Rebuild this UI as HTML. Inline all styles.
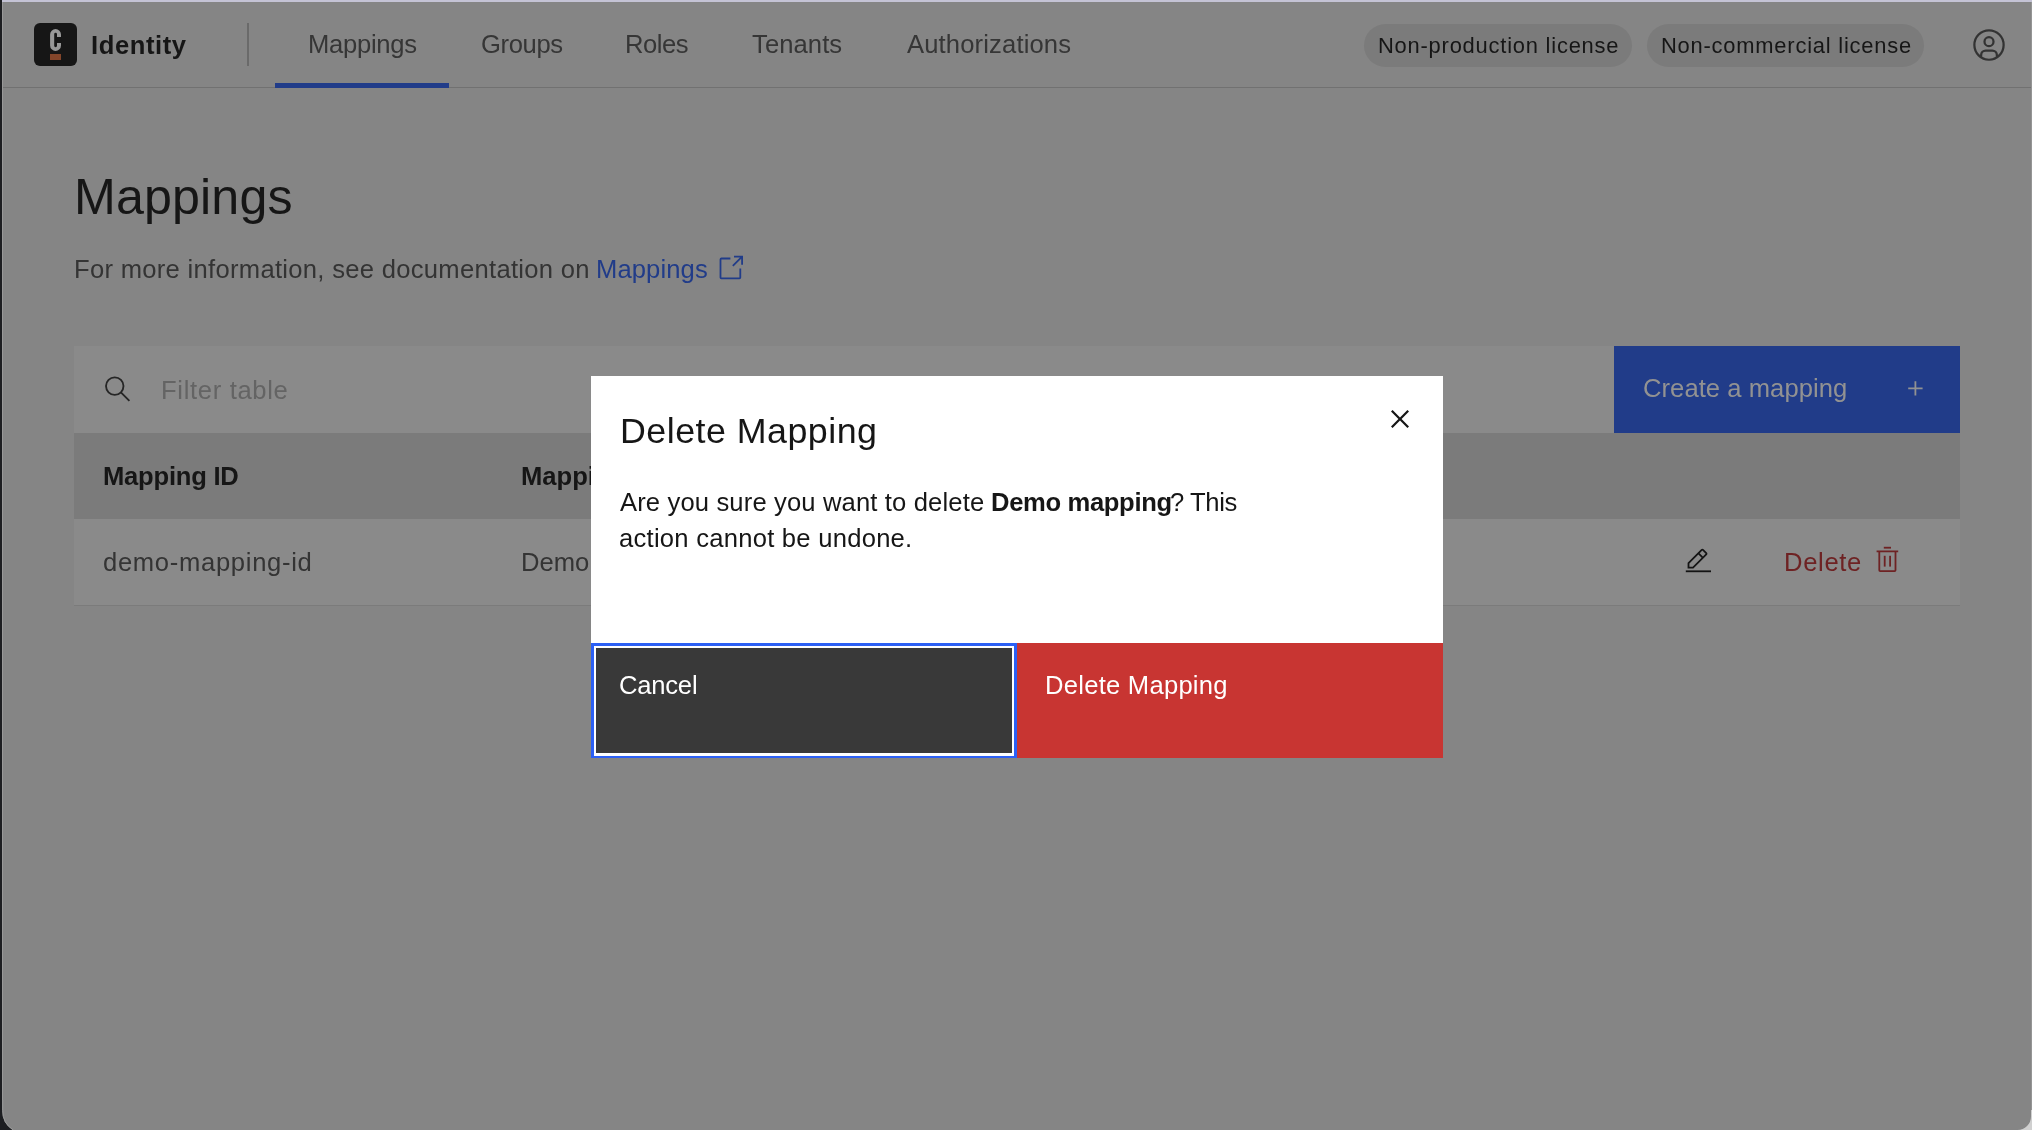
<!DOCTYPE html>
<html><head><meta charset="utf-8"><style>
html,body{margin:0;padding:0;}
body{width:2032px;height:1130px;position:relative;overflow:hidden;background:#858585;font-family:"Liberation Sans", sans-serif;}
.a{position:absolute;}
.t{position:absolute;white-space:nowrap;line-height:0;font-family:"Liberation Sans", sans-serif;will-change:transform;}
svg{position:absolute;overflow:visible;}
</style></head><body>
<div class="a" style="left:0;top:0;width:2032px;height:2px;background:#c4c3d5"></div>
<div class="a" style="left:0;top:0;width:2px;height:1130px;background:#1d1e21"></div>
<div class="a" style="left:2px;top:2px;width:1px;height:1108px;background:#999"></div>
<div class="a" style="left:2031px;top:2px;width:1px;height:1114px;background:#959595"></div>
<div class="a" style="left:3px;top:87px;width:2028px;height:1px;background:#717171"></div>
<div class="a" style="left:34px;top:23px;width:43px;height:43px;border-radius:6px;background:#161616"></div>
<svg style="left:0;top:0" width="1" height="1"><path fill-rule="evenodd" d="M50.1,34.5 a5.45,5.45 0 0 1 10.9,0 v11 a5.45,5.45 0 0 1 -10.9,0 z M54.2,34.2 a1.4,1.4 0 0 1 2.8,0 v11.6 a1.4,1.4 0 0 1 -2.8,0 z" fill="#989898"/><rect x="56.4" y="37" width="5" height="6" fill="#161616"/></svg>
<div class="a" style="left:50px;top:54px;width:11px;height:6px;background:#83452a"></div>
<div class="t" style="left:90.8px;top:44.9px;font-size:25.6px;font-weight:700;letter-spacing:0.57px;color:#161616;">Identity</div>
<div class="a" style="left:247px;top:23px;width:1.5px;height:43px;background:#6a6a6a"></div>
<div class="t" style="left:307.7px;top:43.8px;font-size:25.6px;font-weight:400;letter-spacing:-0.27px;color:#363636;">Mappings</div>
<div class="t" style="left:480.5px;top:43.8px;font-size:25.6px;font-weight:400;letter-spacing:-0.36px;color:#363636;">Groups</div>
<div class="t" style="left:624.7px;top:43.8px;font-size:25.6px;font-weight:400;letter-spacing:-0.50px;color:#363636;">Roles</div>
<div class="t" style="left:751.5px;top:43.8px;font-size:25.6px;font-weight:400;letter-spacing:0.08px;color:#363636;">Tenants</div>
<div class="t" style="left:906.6px;top:43.8px;font-size:25.6px;font-weight:400;letter-spacing:0.14px;color:#363636;">Authorizations</div>
<div class="a" style="left:275px;top:83px;width:174px;height:5px;background:#213c89"></div>
<div class="a" style="left:1364px;top:24px;width:268px;height:43px;border-radius:22px;background:#7b7b7b"></div>
<div class="a" style="left:1647px;top:24px;width:277px;height:43px;border-radius:22px;background:#7b7b7b"></div>
<div class="t" style="left:1378.0px;top:46.0px;font-size:21.9px;font-weight:400;letter-spacing:0.79px;color:#161616;">Non-production license</div>
<div class="t" style="left:1660.5px;top:46.0px;font-size:21.9px;font-weight:400;letter-spacing:0.79px;color:#161616;">Non-commercial license</div>
<svg style="left:1971px;top:27px" width="36" height="36" viewBox="0 0 32 32"><g fill="#333"><path d="M16,8a5,5,0,1,0,5,5A5,5,0,0,0,16,8Zm0,8a3,3,0,1,1,3-3A3.0034,3.0034,0,0,1,16,16Z"/><path d="M16,2A14,14,0,1,0,30,16,14.0158,14.0158,0,0,0,16,2ZM10,26.3765V25a3.0033,3.0033,0,0,1,3-3h6a3.0033,3.0033,0,0,1,3,3v1.3765a11.8989,11.8989,0,0,1-12,0Zm13.9925-1.4507A5.0016,5.0016,0,0,0,19,20H13a5.0016,5.0016,0,0,0-4.9925,4.9258,12,12,0,1,1,15.985,0Z"/></g></svg>
<div class="t" style="left:73.8px;top:197.2px;font-size:50.2px;font-weight:400;letter-spacing:0.13px;color:#161616;">Mappings</div>
<div class="t" style="left:74.0px;top:269.0px;font-size:25.6px;font-weight:400;letter-spacing:0.29px;color:#343434;">For more information, see documentation on</div>
<div class="t" style="left:596.2px;top:269.0px;font-size:25.6px;font-weight:400;letter-spacing:0.11px;color:#213c89;">Mappings</div>
<svg style="left:715.6px;top:253.9px" width="28.8" height="28.8" viewBox="0 0 32 32"><g fill="#213c89"><path d="M26,28H6a2.0027,2.0027,0,0,1-2-2V6A2.0027,2.0027,0,0,1,6,4H16V6H6V26H26V16h2V26A2.0027,2.0027,0,0,1,26,28Z"/><polygon points="20 2 20 4 26.586 4 18 12.586 19.414 14 28 5.414 28 12 30 12 30 2 20 2"/></g></svg>
<div class="a" style="left:74px;top:346px;width:1886px;height:87px;background:#8a8a8a"></div>
<svg style="left:0;top:0" width="1" height="1"><g fill="none" stroke="#262626"><circle cx="114.75" cy="386.1" r="8.75" stroke-width="1.85"/><line x1="120.9" y1="392.3" x2="129.4" y2="400.8" stroke-width="1.9"/></g></svg>
<div class="t" style="left:160.9px;top:390.0px;font-size:25.6px;font-weight:400;letter-spacing:0.67px;color:#646464;">Filter table</div>
<div class="a" style="left:1614px;top:346px;width:346px;height:87px;background:#213c89"></div>
<div class="t" style="left:1643.0px;top:388.3px;font-size:25.6px;font-weight:400;letter-spacing:0.05px;color:#929292;">Create a mapping</div>
<svg style="left:1900.5px;top:373.6px" width="28.8" height="28.8" viewBox="0 0 32 32"><polygon fill="#929292" points="17 15 17 8 15 8 15 15 8 15 8 17 15 17 15 24 17 24 17 17 24 17 24 15 17 15"/></svg>
<div class="a" style="left:74px;top:433px;width:1886px;height:86px;background:#7b7b7b"></div>
<div class="t" style="left:102.7px;top:475.7px;font-size:25.6px;font-weight:700;letter-spacing:-0.23px;color:#161616;">Mapping ID</div>
<div class="t" style="left:520.8px;top:475.7px;font-size:25.6px;font-weight:700;color:#161616">Mapping name</div>
<div class="a" style="left:74px;top:519px;width:1886px;height:86px;background:#8a8a8a"></div>
<div class="a" style="left:74px;top:605px;width:1886px;height:1px;background:#7b7b7b"></div>
<div class="t" style="left:102.5px;top:561.6px;font-size:25.6px;font-weight:400;letter-spacing:0.69px;color:#343434;">demo-mapping-id</div>
<div class="t" style="left:520.6px;top:561.6px;font-size:25.6px;font-weight:400;color:#343434">Demo mapping</div>
<svg style="left:1684.2px;top:547px" width="28.8" height="28.8" viewBox="0 0 32 32"><g fill="#141414"><rect x="2" y="26" width="28" height="2"/><path d="M25.4,9c0.8-0.8,0.8-2,0-2.8c0,0,0,0,0,0l-3.6-3.6c-0.8-0.8-2-0.8-2.8,0c0,0,0,0,0,0l-15,15V24h6.4L25.4,9z M20.4,4L24,7.6 l-3,3L17.4,7L20.4,4z M6,22v-3.6l10-10l3.6,3.6l-10,10H6z"/></g></svg>
<div class="t" style="left:1784.4px;top:562.2px;font-size:25.6px;font-weight:400;letter-spacing:0.66px;color:#6e2223;">Delete</div>
<svg style="left:1873.2px;top:545.2px" width="28.8" height="28.8" viewBox="0 0 32 32"><g fill="#6e2223"><rect x="12" y="12" width="2" height="12"/><rect x="18" y="12" width="2" height="12"/><path d="M4,6V8H6V28a2,2,0,0,0,2,2H24a2,2,0,0,0,2-2V8h2V6ZM8,28V8H24V28Z"/><rect x="12" y="2" width="8" height="2"/></g></svg>
<div class="a" style="left:591px;top:376px;width:852px;height:382px;background:#ffffff"></div>
<div class="t" style="left:620.3px;top:430.8px;font-size:35.8px;font-weight:400;letter-spacing:0.48px;color:#161616;">Delete Mapping</div>
<svg style="left:1382.3px;top:400.6px" width="36" height="36" viewBox="0 0 32 32"><polygon fill="#161616" points="24 9.4 22.6 8 16 14.6 9.4 8 8 9.4 14.6 16 8 22.6 9.4 24 16 17.4 22.6 24 24 22.6 17.4 16 24 9.4"/></svg>
<div class="t" style="left:620.3px;top:501.7px;font-size:25.6px;font-weight:400;letter-spacing:0.14px;color:#161616;">Are you sure you want to delete</div>
<div class="t" style="left:990.7px;top:501.7px;font-size:25.6px;font-weight:700;letter-spacing:-0.34px;color:#161616;">Demo mapping</div>
<div class="t" style="left:1169.8px;top:501.7px;font-size:25.6px;color:#161616;letter-spacing:-0.4px">? This</div>
<div class="t" style="left:619.3px;top:537.6px;font-size:25.6px;font-weight:400;letter-spacing:0.25px;color:#161616;">action cannot be undone.</div>
<div class="a" style="left:591px;top:643px;width:426px;height:115px;background:#2c60f5"></div>
<div class="a" style="left:593.8px;top:645.8px;width:420.4px;height:109.9px;background:#ffffff"></div>
<div class="a" style="left:596px;top:648px;width:416px;height:105px;background:#393939"></div>
<div class="t" style="left:618.8px;top:685.0px;font-size:25.6px;font-weight:400;letter-spacing:-0.22px;color:#ffffff;">Cancel</div>
<div class="a" style="left:1017px;top:643px;width:426px;height:115px;background:#c83532"></div>
<div class="t" style="left:1044.6px;top:685.0px;font-size:25.6px;font-weight:400;letter-spacing:0.25px;color:#ffffff;">Delete Mapping</div>
<svg style="left:0;top:0" width="1" height="1"><path d="M0,1100 H2.2 V1110.5 A23.2,23.2 0 0 0 12.47,1130 H0 Z" fill="#1d1e21"/><path d="M2.7,1100 V1110.5 A22.7,22.7 0 0 0 13.3,1130" fill="none" stroke="#9a9a9a" stroke-width="1"/><path d="M2032,1110 V1130 H2017.5 A13.5,13.5 0 0 0 2031,1116.5 V1110 Z" fill="#d0d0d0"/></svg>
</body></html>
